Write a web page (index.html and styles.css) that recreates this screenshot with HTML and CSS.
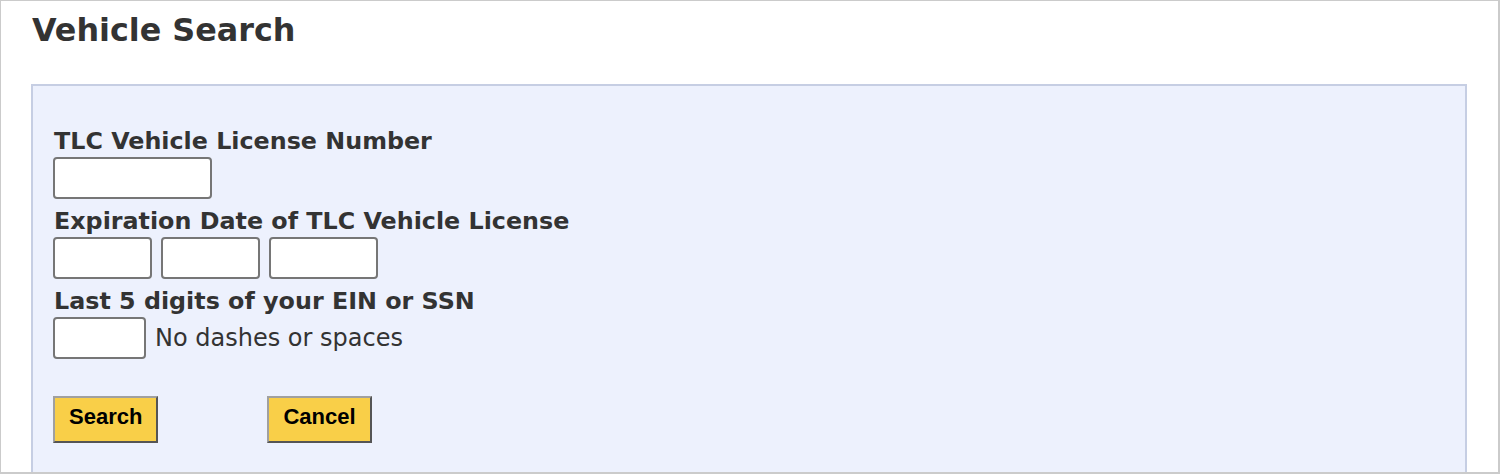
FILE: index.html
```html
<!DOCTYPE html>
<html lang="en">
<head>
  <meta charset="UTF-8" />
  <meta name="viewport" content="width=device-width, initial-scale=1.0"/>
  <title>Vehicle Search</title>
  <link rel="stylesheet" href="styles.css">
</head>
<body>

  <div class="page">
    <h1>Vehicle Search</h1>

    <!-- Search Form -->
    <form class="search-box" id="searchForm">
      <label for="licenseNo">TLC Vehicle License Number</label>
      <input type="text" id="licenseNo" class="input-license" />

      <label for="expMonth">Expiration Date of TLC Vehicle License</label>
      <div class="date-row">
        <input type="text" id="expMonth" class="input-date" />
        <input type="text" id="expDay" class="input-date" />
        <input type="text" id="expYear" class="input-year" />
      </div>

      <label for="taxId">Last 5 digits of your EIN or SSN</label>
      <div class="ssn-row">
        <input type="text" id="taxId" class="input-ssn" maxlength="5" />
        <span class="hint">No dashes or spaces</span>
      </div>

      <div class="buttons">
        <button type="submit" class="btn">Search</button>
        <button type="reset" class="btn">Cancel</button>
      </div>
    </form>
  </div>

</body>
</html>
```

FILE: styles.css
```css
body {
  margin: 0;
  font-family: 'DejaVu Sans', Verdana, sans-serif;
  color: #333;
  background: #fff;
}

/* Page frame */
.page {
  height: 474px;
  box-sizing: border-box;
  border: 1px solid #cbcbcb;
  border-right-width: 2px;
  border-bottom-width: 2px;
  padding: 0 31px 0 30px;
  overflow: hidden;
}

h1 {
  font-size: 31.8px;
  font-weight: bold;
  margin: 10px 0 36px 1px;
  color: #333;
}

/* Form box */
.search-box {
  background: #edf1fd;
  border: 2px solid #c6cee3;
  padding: 33px 20px 60px 20px;
  min-height: 500px;
}

label {
  display: block;
  font-size: 23.8px;
  font-weight: bold;
  line-height: 28px;
  margin: 8px 0 2px 1px;
}

input[type="text"] {
  height: 42px;
  box-sizing: border-box;
  border: 2px solid #767676;
  border-radius: 4px;
  background: #fff;
  padding: 2px 4px;
  font-size: 18px;
  margin: 0;
  display: block;
}

.input-license {
  width: 159px;
}

.date-row,
.ssn-row {
  display: flex;
  align-items: center;
  gap: 9px;
}

.input-date {
  width: 99px;
}

.input-year {
  width: 109px;
}

.input-ssn {
  width: 93px;
}

.hint {
  font-size: 24px;
  line-height: 28px;
}

/* Buttons */
.buttons {
  display: flex;
  gap: 109px;
  margin-top: 37px;
}

.btn {
  height: 47px;
  padding: 0 14px 5px 14px;
  background-color: #f9cf48;
  border: 2px solid;
  border-color: #a0a0a0 #555 #555 #a0a0a0;
  font-family: 'Liberation Sans', Arial, sans-serif;
  font-size: 22px;
  font-weight: bold;
  color: #000;
  cursor: pointer;
}

.btn:hover {
  background-color: #f5c32a;
}
```
